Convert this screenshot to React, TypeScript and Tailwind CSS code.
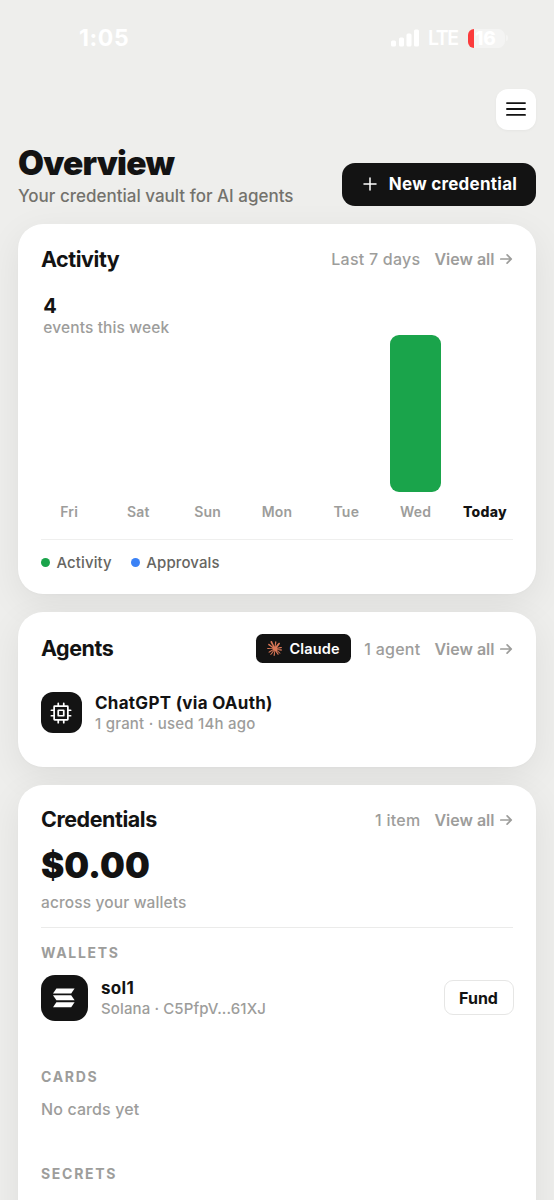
import React from 'react';
import { SiClaude } from 'react-icons/si';

interface Day {
  label: string;
  activity: number;
  today?: boolean;
}

const days: Day[] = [
  { label: 'Fri', activity: 0 },
  { label: 'Sat', activity: 0 },
  { label: 'Sun', activity: 0 },
  { label: 'Mon', activity: 0 },
  { label: 'Tue', activity: 0 },
  { label: 'Wed', activity: 4 },
  { label: 'Today', activity: 0, today: true },
];

const total = days.reduce((sum, day) => sum + day.activity, 0);
const max = Math.max(...days.map(day => day.activity));

const ArrowIcon: React.FC = () => (
  <svg width="14" height="14" viewBox="0 0 14 14" fill="none" stroke="currentColor" strokeWidth="1.7" strokeLinecap="round" strokeLinejoin="round">
    <path d="M1.8 7h10.4M8.1 2.8 12.3 7l-4.2 4.2" />
  </svg>
);

const CpuIcon: React.FC = () => (
  <svg width="22" height="22" viewBox="0 0 24 24" fill="none" stroke="currentColor" strokeWidth="1.9" strokeLinecap="round">
    <rect x="4.5" y="4.5" width="15" height="15" rx="0.6" />
    <rect x="9" y="9" width="6" height="6" rx="0.4" />
    <path d="M9 1.5v3M15 1.5v3M9 19.5v3M15 19.5v3M19.5 9h3M19.5 15h3M1.5 9h3M1.5 15h3" />
  </svg>
);

const SolanaIcon: React.FC = () => (
  <svg width="24" height="20" viewBox="0 0 24 20" fill="currentColor">
    <path d="M4.4.6h18.2l-3.4 4.9H1z" />
    <path d="M1 7.3h18.2l3.4 4.9H4.4z" />
    <path d="M4.4 14.3h18.2l-3.4 4.9H1z" />
  </svg>
);

const StatusBar: React.FC = () => (
  <div className="flex h-[89px] shrink-0 items-start justify-between pl-[79px] pr-[46px] pt-[26px] text-white">
    <span className="text-[23px] font-bold leading-6 tracking-[0.6px]">1:05</span>
    <div className="flex h-6 items-center">
      <svg width="30" height="18" viewBox="0 0 30 18" fill="currentColor">
        <rect x="0" y="11.5" width="5" height="6" rx="1.5" />
        <rect x="8" y="8.5" width="5" height="9" rx="1.5" />
        <rect x="15.5" y="4.5" width="5" height="13" rx="1.5" />
        <rect x="23" y="0.5" width="5" height="17" rx="1.5" />
      </svg>
      <span className="ml-[7px] w-[32px] text-[19.5px] font-semibold leading-6 tracking-[-1.4px]">LTE</span>
      <div className="ml-[8px] flex h-[19px] w-[37px] items-center rounded-[7px] bg-[#f4f4f3]">
        <span className="h-full w-[6px] rounded-l-[6px] bg-[#fb3b3c]" />
        <span className="ml-[1px] text-[19px] font-extrabold leading-[23px] tracking-[-0.2px]">16</span>
      </div>
      <span className="ml-[1px] h-[6px] w-[2px] rounded-r-full bg-[#f4f4f3]" />
    </div>
  </div>
);

interface CardProps {
  title: string;
  meta: string;
  badge?: React.ReactNode;
  className: string;
  children: React.ReactNode;
}

const Card: React.FC<CardProps> = ({ title, meta, badge, className, children }) => (
  <section className={`shrink-0 rounded-[25px] bg-white px-[23px] shadow-[0_10px_36px_rgba(20,20,18,0.07),0_1px_3px_rgba(20,20,18,0.02)] ${className}`}>
    <div className="flex h-[29px] items-center">
      <h2 className="text-[21.5px] font-bold tracking-[-0.45px]">{title}</h2>
      <div className="ml-auto flex items-center text-[16px] text-[#9d9d9b]">
        {badge}
        <span className="font-medium tracking-[0.25px]">{meta}</span>
        <a className="ml-[14px] flex items-center gap-[4.5px] font-semibold">
          View all
          <ArrowIcon />
        </a>
      </div>
    </div>
    {children}
  </section>
);

const SectionLabel: React.FC<{ children: string }> = ({ children }) => (
  <h3 className="text-[14px] font-bold leading-[18px] tracking-[1.7px] text-[#9d9d9b]">{children}</h3>
);

const App: React.FC = () => (
  <div className="flex h-[1200px] w-[554px] flex-col overflow-hidden bg-[#eeeeec] font-['Inter',sans-serif] text-[#131313]">
    <StatusBar />

    <header className="shrink-0 px-[18px]">
      <div className="flex justify-end">
        <button className="flex h-[40.5px] w-[40.5px] items-center justify-center rounded-[12px] bg-white shadow-[0_1px_3px_rgba(0,0,0,0.04)]">
          <svg width="20" height="16" viewBox="0 0 20 16" stroke="currentColor" strokeWidth="1.9" strokeLinecap="round">
            <path d="M1 2.1h18M1 8h18M1 13.9h18" />
          </svg>
        </button>
      </div>
      <div className="mt-[12.5px] flex h-[64px] items-end justify-between">
        <div>
          <h1 className="text-[33.5px] font-black leading-[41px] tracking-[-0.8px]">Overview</h1>
          <p className="-mb-[1px] mt-[2px] text-[17px] font-medium leading-[21px] text-[#73726c]">Your credential vault for AI agents</p>
        </div>
        <button className="mb-[0.5px] flex h-[42.5px] w-[194px] items-center justify-center gap-[12px] rounded-[13px] bg-[#131313] pl-[2px] text-white">
          <svg width="14" height="14" viewBox="0 0 14 14" stroke="currentColor" strokeWidth="1.5" strokeLinecap="round">
            <path d="M7 1v12M1 7h12" />
          </svg>
          <span className="text-[17px] font-bold tracking-[0.27px]">New credential</span>
        </button>
      </div>
    </header>

    <main className="flex flex-col gap-[18px] px-[18px] pt-[18px]">
      <Card title="Activity" meta="Last 7 days" className="h-[369.5px] pt-[20.5px]">
        <div className="mt-[21px] px-[2.3px]">
          <div className="text-[20px] font-bold leading-[23px]">{total}</div>
          <div className="text-[15.5px] font-medium leading-[19px] tracking-[0.13px] text-[#9d9d9b]">events this week</div>
        </div>
        <div className="-mt-[2px] grid grid-cols-7 gap-x-[17.7px] px-[2.3px]">
          {days.map(day => (
            <div key={day.label} className="flex h-[186px] flex-col items-center">
              <div className="flex h-[157px] w-full shrink-0 items-end">
                {day.activity ? <div className="w-full rounded-[9px] bg-[#1aa44b]" style={{ height: `${(day.activity / max) * 100}%` }} /> : null}
              </div>
              <span className={`mt-[11px] text-[14px] leading-[18px] ${day.today ? 'font-extrabold tracking-[0.25px]' : 'font-semibold tracking-[0.2px] text-[#9d9d9b]'}`}>{day.label}</span>
            </div>
          ))}
        </div>
        <div className="mt-[18px] flex items-center border-t border-[#efefee] pt-[13.5px] text-[15px] font-medium leading-[19px] tracking-[0.1px] text-[#666561]">
          <span className="mr-[6.5px] h-[9px] w-[9px] rounded-full bg-[#1aa44b]" />
          Activity
          <span className="ml-[19px] mr-[6.5px] h-[9px] w-[9px] rounded-full bg-[#3b82f6]" />
          Approvals
        </div>
      </Card>

      <Card
        title="Agents"
        meta="1 agent"
        className="h-[155px] pt-[22.5px]"
        badge={
          <span className="mr-[13.5px] flex h-[29px] w-[94.5px] items-center justify-center gap-[7px] rounded-[6.5px] bg-[#131313] text-[14.5px] font-semibold tracking-[0.15px] text-white">
            <SiClaude size={15} color="#d97757" />
            Claude
          </span>
        }
      >
        <div className="mt-[28.5px] flex items-center">
          <div className="flex h-[40.5px] w-[40.5px] items-center justify-center rounded-[12px] bg-[#131313] text-white">
            <CpuIcon />
          </div>
          <div className="ml-[13.5px] pt-[1px]">
            <div className="text-[17px] font-bold leading-[21px] tracking-[0.28px]">ChatGPT (via OAuth)</div>
            <div className="text-[15px] font-medium leading-[20px] tracking-[0.22px] text-[#9d9d9b]">1 grant · used 14h ago</div>
          </div>
        </div>
      </Card>

      <Card title="Credentials" meta="1 item" className="h-[460px] pt-[20.5px]">
        <div className="mt-[9px] text-[35px] font-black leading-[44px]">$0.00</div>
        <div className="mt-[6px] text-[15.5px] font-medium leading-[19px] tracking-[0.13px] text-[#9d9d9b]">across your wallets</div>
        <div className="mt-[15px] border-t border-[#ebebea] pt-[16px]">
          <SectionLabel>WALLETS</SectionLabel>
          <div className="mt-[12.5px] flex items-center">
            <div className="flex h-[46.5px] w-[46.5px] items-center justify-center rounded-[14px] bg-[#131313] text-white">
              <SolanaIcon />
            </div>
            <div className="ml-[13.5px] pt-[2px]">
              <div className="text-[17px] font-bold leading-[21px] tracking-[0.3px]">sol1</div>
              <div className="text-[15px] font-medium leading-[20px] tracking-[0.12px] text-[#9d9d9b]">Solana · C5PfpV...61XJ</div>
            </div>
            <button className="-mr-[0.5px] ml-auto h-[35px] w-[70px] rounded-[9px] border-[1.5px] border-[#e6e6e5] text-[16px] font-bold">Fund</button>
          </div>
        </div>
        <div className="mt-[46.5px]">
          <SectionLabel>CARDS</SectionLabel>
          <div className="mt-[13px] text-[16px] font-medium leading-[20px] tracking-[0.12px] text-[#9d9d9b]">No cards yet</div>
        </div>
        <div className="mt-[46.5px]">
          <SectionLabel>SECRETS</SectionLabel>
        </div>
      </Card>
    </main>
  </div>
);

export default App;
